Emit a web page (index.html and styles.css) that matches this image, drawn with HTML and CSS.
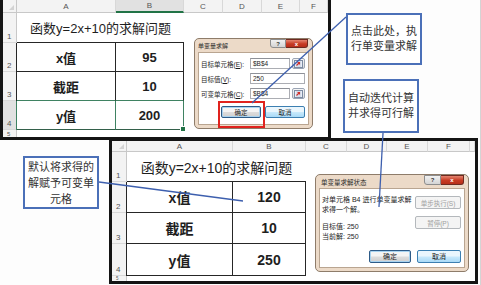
FILE: index.html
```html
<!DOCTYPE html>
<html>
<head>
<meta charset="UTF-8">
<title>单变量求解</title>
<link rel="stylesheet" href="styles.css">
</head>
<body>
<div class="stage">
	<!--上面的截图：单变量求解对话框-->
	<div class="sheet sheet-top">
		<div class="grid grid-top">
			<div class="corner"></div>
			<div class="colhead">A</div>
			<div class="colhead on">B</div>
			<div class="colhead">C</div>
			<div class="colhead">D</div>
			<div class="colhead">E</div>
			<div class="colhead">F</div>

			<div class="rowhead">1</div>
			<div class="title">函数y=2x+10的求解问题</div>

			<div class="rowhead">2</div>
			<div class="cell a">x值</div>
			<div class="cell">95</div>

			<div class="rowhead">3</div>
			<div class="cell a g-bottom">截距</div>
			<div class="cell g-bottom">10</div>

			<div class="rowhead on">4</div>
			<div class="cell a green">y值</div>
			<div class="cell green picked">200</div>

			<div class="rowhead cut">5</div>
		</div>

		<div class="dialog dlg-solve">
			<div class="dlg-bar">
				<span class="dlg-title">单变量求解</span>
				<span class="tb tb-help">?</span>
				<span class="tb tb-close">x</span>
			</div>
			<div class="dlg-body solve-body">
				<div class="field">
					<span class="label">目标单元格(<u>E</u>):</span>
					<span class="input">$B$4</span>
					<span class="refbtn"><svg viewBox="0 0 9 8" width="9" height="8"><rect x="0.5" y="0.5" width="8" height="7" fill="#e8eef8" stroke="#7d8ca3"/><path d="M2 2h5M2 4h5M2 6h5" stroke="#a9b6c9" stroke-width="0.6"/><path d="M2.5 5.5l3-3M3.5 2.5h2v2" stroke="#d0302a" stroke-width="1.1" fill="none"/></svg></span>
				</div>
				<div class="field">
					<span class="label">目标值(<u>V</u>):</span>
					<span class="input wide">250</span>
				</div>
				<div class="field">
					<span class="label">可变单元格(<u>C</u>):</span>
					<span class="input">$B$4</span>
					<span class="refbtn"><svg viewBox="0 0 9 8" width="9" height="8"><rect x="0.5" y="0.5" width="8" height="7" fill="#e8eef8" stroke="#7d8ca3"/><path d="M2 2h5M2 4h5M2 6h5" stroke="#a9b6c9" stroke-width="0.6"/><path d="M2.5 5.5l3-3M3.5 2.5h2v2" stroke="#d0302a" stroke-width="1.1" fill="none"/></svg></span>
				</div>
				<div class="btns">
					<span class="btn default">确定</span>
					<span class="btn hot">取消</span>
				</div>
			</div>
		</div>
	</div>

	<!--下面的截图：求解状态-->
	<div class="sheet sheet-bottom">
		<div class="grid grid-bottom">
			<div class="corner"></div>
			<div class="colhead">A</div>
			<div class="colhead">B</div>
			<div class="colhead">C</div>
			<div class="colhead">D</div>
			<div class="colhead">E</div>
			<div class="colhead">F</div>
			<div class="colhead"></div>

			<div class="rowhead">1</div>
			<div class="title">函数y=2x+10的求解问题</div>

			<div class="rowhead">2</div>
			<div class="cell a">x值</div>
			<div class="cell">120</div>

			<div class="rowhead">3</div>
			<div class="cell a">截距</div>
			<div class="cell">10</div>

			<div class="rowhead">4</div>
			<div class="cell a">y值</div>
			<div class="cell">250</div>

			<div class="rowhead cut tiny">5</div>
		</div>

		<div class="dialog dlg-status">
			<div class="dlg-bar">
				<span class="dlg-title">单变量求解状态</span>
				<span class="tb tb-help">?</span>
				<span class="tb tb-close">x</span>
			</div>
			<div class="dlg-body status-body">
				<div class="msg">
					<p>对单元格 B4 进行单变量求解</p>
					<p>求得一个解。</p>
					<p class="gap">目标值: 250</p>
					<p>当前解: 250</p>
				</div>
				<div class="side">
					<span class="btn off">单步执行(S)</span>
					<span class="btn off">暂停(P)</span>
				</div>
				<div class="btns">
					<span class="btn default">确定</span>
					<span class="btn hot">取消</span>
				</div>
			</div>
		</div>
	</div>

	<!--标注框-->
	<div class="mark"></div>
	<div class="note note-run">点击此处，执<br>行单变量求解</div>
	<div class="note note-iter">自动迭代计算<br>并求得可行解</div>
	<div class="note note-assign">默认将求得的<br>解赋予可变单<br>元格</div>

	<svg class="links" width="481" height="285">
		<line x1="346" y1="17" x2="252" y2="103"/>
		<line x1="383" y1="133" x2="379" y2="207"/>
		<line x1="99" y1="182" x2="243" y2="201"/>
	</svg>
</div>
</body>
</html>
```

FILE: styles.css
```css
*{
	margin: 0;
	padding: 0;
	box-sizing: border-box;
}
body{
	background-color: #fff;
	font-family: "Liberation Sans", "Noto Sans CJK SC", sans-serif;
	color: #1e1e1e;
}
.stage{
	position: relative;
	width: 481px;
	height: 285px;
	overflow: hidden;
	background-color: #fdfdfd;
	border-right: 1px solid #d4d4d4;
}

/*两张表格截图*/
.sheet{
	position: absolute;
	background-color: #fff;
	border: 3px solid #141414;
}
.sheet-top{
	left: 0;
	top: 0;
	border-top: 0;
}
.sheet-bottom{
	left: 109px;
	top: 138px;
}
.grid{
	display: grid;
}
.grid-top{
	grid-template-columns: 14px 99px 68px 39px 39px 38px 28px;
	grid-template-rows: 13px 30px 29px 29px 29px 7px;
	font-size: 13px;
}
.grid-bottom{
	grid-template-columns: 15px 106px 73px 41px 40px 41px 42px 5px;
	grid-template-rows: 11px 30px 31px 31px 32px 5px;
	font-size: 14px;
}
.corner{
	position: relative;
	background-color: #f3f3f3;
	border-right: 1px solid #c8c8c8;
	border-bottom: 1px solid #c8c8c8;
}
.corner::after{
	content: "";
	position: absolute;
	right: 2px;
	bottom: 2px;
	border-left: 5px solid transparent;
	border-bottom: 5px solid #d2d2d2;
}
.colhead{
	display: flex;
	align-items: center;
	justify-content: center;
	background-color: #f3f3f3;
	border-right: 1px solid #d8d8d8;
	border-bottom: 1px solid #c8c8c8;
	font-size: 8px;
	color: #555;
}
.colhead.on{
	background-color: #e1e1e1;
	border-bottom: 2px solid #217346;
}
.rowhead{
	grid-column: 1;
	display: flex;
	align-items: flex-end;
	padding: 0 0 1px 4px;
	background-color: #f3f3f3;
	border-right: 1px solid #c8c8c8;
	border-bottom: 1px solid #d8d8d8;
	font-size: 8px;
	line-height: 9px;
	color: #555;
}
.rowhead.on{
	background-color: #e1e1e1;
}
/*被截掉一半的第5行*/
.rowhead.cut{
	align-items: center;
	padding: 0 0 0 4px;
	border-bottom: 0;
	font-size: 6px;
	line-height: 6px;
}
.rowhead.tiny{
	font-size: 4.5px;
	line-height: 5px;
}
.title{
	grid-column: 2 / span 2;
	display: flex;
	align-items: center;
	justify-content: center;
	border-bottom: 1px solid #262626;
}
.cell{
	display: flex;
	align-items: center;
	justify-content: center;
	border-right: 1px solid #262626;
	border-bottom: 1px solid #262626;
	font-weight: bold;
}
.cell.a{
	box-shadow: -1px 0 0 #262626;
}
/*选中的第4行*/
.cell.g-bottom{
	border-bottom-color: #3f8262;
}
.cell.green{
	border-right-color: #3f8262;
	border-bottom-color: #33604a;
}
.cell.a.green{
	box-shadow: -1px 0 0 #3f8262;
}
.cell.picked{
	position: relative;
}
.cell.picked::after{
	content: "";
	position: absolute;
	right: -3px;
	bottom: -3px;
	width: 4px;
	height: 4px;
	background-color: #217346;
	border: 1px solid #fff;
}

/*对话框*/
.dialog{
	position: absolute;
	display: flex;
	flex-direction: column;
	background-color: #ecdac8;
	border: 1px solid #8e7c6a;
	border-radius: 5px;
	padding: 0 3px 3px;
	color: #1e1e1e;
}
.dlg-solve{
	left: 191px;
	top: 38px;
	width: 119px;
	height: 91px;
	font-size: 6.5px;
}
.dlg-status{
	left: 203px;
	top: 33px;
	width: 154px;
	height: 98px;
	font-size: 7px;
}
.dlg-bar{
	display: flex;
	height: 13px;
}
.dlg-title{
	flex: 1;
	align-self: center;
	font-size: 6px;
	color: #2a2a2a;
}
.dlg-status .dlg-title{
	font-size: 6.5px;
	padding-left: 2px;
}
.tb{
	display: flex;
	align-items: center;
	justify-content: center;
	height: 9px;
	font-size: 6px;
	line-height: 1;
}
.tb-help{
	width: 16px;
	border: 1px solid #8d8d8d;
	border-radius: 0 0 0 3px;
	background: linear-gradient(#f1f1f1, #d4d4d4);
	color: #333;
	font-weight: bold;
}
.tb-close{
	width: 22px;
	margin-right: 1px;
	border: 1px solid #6e2a20;
	border-left: 0;
	border-radius: 0 0 3px 0;
	background: linear-gradient(#e4846f, #c73a23 55%, #b72f1a);
	color: #fff;
	font-weight: bold;
}
.dlg-status .tb{
	height: 10px;
}
.dlg-status .tb-help{
	width: 17px;
}
.dlg-status .tb-close{
	width: 23px;
}
.dlg-body{
	flex: 1;
	background-color: #fff;
	border: 1px solid #b9a591;
}
.solve-body{
	display: flex;
	flex-direction: column;
	gap: 4px;
	padding: 5px 3px 0 2px;
}
.field{
	display: grid;
	grid-template-columns: 47px 1fr 13px;
	column-gap: 2px;
	align-items: center;
	height: 11px;
}
.input{
	height: 100%;
	display: flex;
	align-items: center;
	padding-left: 2px;
	border: 1px solid #abadb3;
	border-top-color: #8e9198;
}
.input.wide{
	grid-column: 2 / span 2;
}
.refbtn{
	display: flex;
	align-items: center;
	justify-content: center;
	height: 100%;
	border: 1px solid #9aa4b4;
	border-radius: 2px;
	background: linear-gradient(#f6f6f6, #dcdcdc);
}
.btns{
	display: flex;
	justify-content: flex-end;
	gap: 4px;
}
.solve-body .btns{
	margin-top: 3px;
}
.btn{
	display: flex;
	align-items: center;
	justify-content: center;
	width: 40px;
	height: 12px;
	border: 1px solid #707070;
	border-radius: 2px;
	background: linear-gradient(#f4f4f4 45%, #dcdcdc 55%, #cfcfcf);
	font-size: 6.5px;
	color: #1e1e1e;
}
.btn.default{
	border-color: #2d5b88;
	box-shadow: inset 0 0 0 1px #a8d3f0;
}
.btn.hot{
	border-color: #3c7fb1;
	background: linear-gradient(#eaf6fd 45%, #c7e8fb 55%, #a9daf7);
}
.btn.off{
	width: 46px;
	height: 13px;
	border-color: #b4b8bc;
	background: #f4f4f4;
	color: #a0a0a0;
}

/*求解状态对话框内容*/
.status-body{
	display: grid;
	grid-template-columns: 1fr 46px;
	row-gap: 7px;
	padding: 6px 3px 4px 2px;
}
.msg p{
	line-height: 10px;
	white-space: nowrap;
}
.msg .gap{
	margin-top: 7px;
}
.side{
	display: flex;
	flex-direction: column;
	gap: 7px;
	padding-top: 1px;
}
.side .btn{
	font-size: 6.5px;
}
.status-body .btns{
	grid-column: 1 / span 2;
	gap: 6px;
}
.status-body .btns .btn{
	width: 42px;
	height: 13px;
	font-size: 7px;
}
.status-body .btns .hot{
	width: 44px;
}

/*红色框，标出确定按钮*/
.mark{
	position: absolute;
	left: 218px;
	top: 101px;
	width: 47px;
	height: 27px;
	border: 2px solid #e0231e;
}

/*说明文字*/
.note{
	position: absolute;
	display: flex;
	align-items: center;
	justify-content: center;
	text-align: center;
	width: 76px;
	background-color: #fff;
	border: 2px solid #4b70b8;
	font-size: 11px;
	line-height: 15px;
	color: #333;
}
.note-run{
	left: 346px;
	top: 13px;
	height: 52px;
}
.note-iter{
	left: 343px;
	top: 79px;
	height: 54px;
}
.note-assign{
	left: 23px;
	top: 156px;
	height: 53px;
	line-height: 16px;
}
.links{
	position: absolute;
	left: 0;
	top: 0;
	pointer-events: none;
}
.links line{
	stroke: #3d5fae;
	stroke-width: 1.3;
}
```
